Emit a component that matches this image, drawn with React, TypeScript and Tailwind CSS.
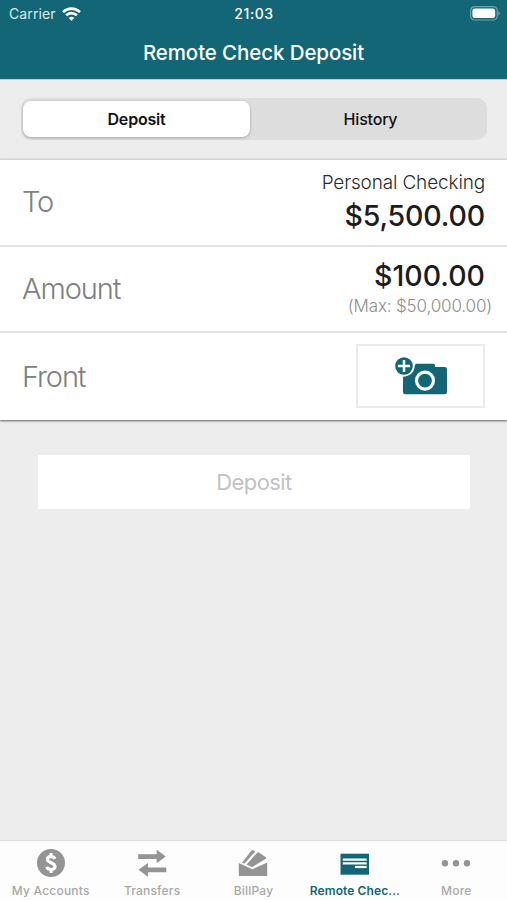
import type { ReactNode } from 'react'
import clsx from 'clsx'

function WifiIcon() {
  return (
    <svg width="19" height="14" viewBox="0 0 19 14" fill="none" stroke="#fff" strokeWidth="2.6">
      <path d="M1 5.1C5.8 .4 13.2 .4 18 5.1" />
      <path d="M4.1 8.3C7.2 5.4 11.8 5.4 14.9 8.3" />
      <path d="M6.6 10.9C8.3 9.4 10.7 9.4 12.4 10.9L9.5 13.8Z" fill="#fff" stroke="none" />
    </svg>
  )
}

function BatteryIcon() {
  return (
    <svg width="31" height="15" viewBox="0 0 31 15">
      <rect x=".6" y=".6" width="26.6" height="13.4" rx="4" fill="none" stroke="#6fa5ae" strokeWidth="1.2" />
      <rect x="2.4" y="2.6" width="22.8" height="9.4" rx="2.2" fill="#fff" />
      <path d="M28.4 5.1C30.5 6 30.5 8.6 28.4 9.5Z" fill="#6fa5ae" />
    </svg>
  )
}

function CameraIcon() {
  return (
    <svg width="53" height="38" viewBox="0 0 53 38">
      <path
        d="M21.5 6.8H38.2Q40 6.8 40 8.6V10H49.7Q52 10 52 12.3V34.8Q52 37.3 49.5 37.3H10.4Q8 37.3 8 34.8V19.7C14.5 19.5 19.5 15.5 19.7 9Q20 6.8 21.5 6.8Z"
        fill="#126675"
      />
      <circle cx="30" cy="23.6" r="8.5" fill="#126675" stroke="#fff" strokeWidth="3.2" />
      <circle cx="9" cy="9" r="8.8" fill="#126675" />
      <path d="M9 2.9V15.1M2.9 9H15.1" stroke="#fff" strokeWidth="2.5" />
    </svg>
  )
}

function DollarIcon() {
  return (
    <svg width="30" height="30" viewBox="0 0 30 30" fill="none" stroke="#fff">
      <circle cx="15" cy="15" r="14" fill="#949494" stroke="none" />
      <path
        d="M19 10.9C17.6 7.8 11.4 7.8 11.4 11.3C11.4 15.2 19 14.2 19 18.6C19 22.4 12.2 22.4 10.7 18.9"
        strokeWidth="3.2"
      />
      <path d="M15.1 5V9M15.1 21V25" strokeWidth="3" />
    </svg>
  )
}

function TransferIcon() {
  return (
    <svg width="30" height="30" viewBox="0 0 30 30" fill="#949494">
      <path d="M1.2 6.2H19.7V1.8L28.8 8.5L19.7 15.2V10.9H1.2Z" />
      <path d="M29.3 19.4H11V15L1.5 21.8L11 28.7V24.2H29.3Z" />
    </svg>
  )
}

function BillPayIcon() {
  return (
    <svg width="30" height="30" viewBox="0 0 30 30" fill="#949494">
      <path d="M4.2 14.7L13.4 2.4Q14.2 1.6 15.2 2.2L17.2 3.5L6.6 15.6Z" />
      <path d="M8.6 16.4L19.2 4.7Q20 3.9 21 4.6L27.8 9.2Q28.7 10 27.7 10.8L14 19.2Z" />
      <path d="M.8 15L14.4 21.2L29.2 14.4V28H.8Z" />
    </svg>
  )
}

function CheckIcon() {
  return (
    <svg width="30" height="30" viewBox="0 0 30 30">
      <path d="M.5 5.7H29V26.7H.5Z" fill="#126675" />
      <path d="M2.8 11.6H26.7M2.8 15.4H26.7" stroke="#fff" strokeWidth="2.4" />
      <path d="M15 19H26.7" stroke="#fff" strokeWidth="2.2" />
    </svg>
  )
}

function MoreIcon() {
  return (
    <svg width="30" height="30" viewBox="0 0 30 30" fill="#949494">
      <circle cx="4" cy="15.3" r="3.2" />
      <circle cx="15" cy="15.3" r="3.2" />
      <circle cx="26" cy="15.3" r="3.2" />
    </svg>
  )
}

const tabs = [
  { label: 'My Accounts', icon: <DollarIcon /> },
  { label: 'Transfers', icon: <TransferIcon /> },
  { label: 'BillPay', icon: <BillPayIcon /> },
  { label: 'Remote Chec...', icon: <CheckIcon />, active: true },
  { label: 'More', icon: <MoreIcon /> },
]

function Row({ label, children }: { label: string; children: ReactNode }) {
  return (
    <div className="flex h-full items-center justify-between pr-[22px] pl-[22px]">
      <span className="text-[29px] leading-9 font-light tracking-[-1.1px] text-[#808080]">{label}</span>
      {children}
    </div>
  )
}

export default function App() {
  return (
    <div className="flex h-[900px] w-[507px] flex-col bg-[#ededed] font-['Inter',sans-serif]">
      <header className="h-[79px] shrink-0 bg-[#126675] text-white">
        <div className="grid h-[27px] grid-cols-3 items-center pr-[6px] pl-[9px]">
          <div className="flex items-center gap-[6px]">
            <span className="text-[14px] tracking-[0.1px] text-[#dcebed]">Carrier</span>
            <WifiIcon />
          </div>
          <span className="pr-[2px] text-center text-[14px] font-medium tracking-[0.6px]">21:03</span>
          <div className="flex justify-end">
            <BatteryIcon />
          </div>
        </div>
        <h1 className="pt-[12px] text-center text-[20.5px] leading-7 font-medium tracking-[-0.1px]">
          Remote Check Deposit
        </h1>
      </header>

      <div className="h-[81px] shrink-0 border-t border-b-2 border-t-[#b5d2d7] border-b-[#dfdfdf] pt-[18px] pr-[20px] pl-[21px]">
        <div className="grid h-[42px] grid-cols-[227px_1fr] rounded-[10px] bg-[#dddddd] py-[3px] pl-[2px] text-[16px] text-[#111]">
          <button className="rounded-[8px] bg-white font-semibold tracking-[-0.2px] shadow-[0_1px_3px_#00000040]">
            Deposit
          </button>
          <button className="pl-[4px] font-medium tracking-[-0.2px]">History</button>
        </div>
      </div>

      <section className="grid h-[260px] shrink-0 grid-rows-3 divide-y-2 divide-[#e2e2e2] bg-white text-[#1c1c1c] shadow-[0_1px_2px_#00000099]">
        <Row label="To">
          <div className="pt-[3px] text-right">
            <p className="text-[19px] leading-6 font-light tracking-[-0.15px] text-[#2c2c2c]">Personal Checking</p>
            <p className="pt-px text-[28.5px] leading-10 font-medium tracking-[-0.15px]">$5,500.00</p>
          </div>
        </Row>
        <Row label="Amount">
          <div className="pb-[2px] text-right">
            <p className="text-[28.5px] leading-9 font-medium tracking-[0px]">$100.00</p>
            <p className="mr-[-7px] text-[17px] leading-6 font-light tracking-[-0.15px] text-[#8e8e8e]">
              (Max: $50,000.00)
            </p>
          </div>
        </Row>
        <Row label="Front">
          <button className="mb-px flex h-16 w-[129px] items-center justify-center border-2 border-[#ebebeb] pl-[2px]">
            <CameraIcon />
          </button>
        </Row>
      </section>

      <button className="mt-[35px] mr-[37px] ml-[38px] h-[54px] shrink-0 bg-white text-[22px] tracking-[-0.6px] text-[#c2c2c2]">
        Deposit
      </button>

      <nav className="mt-auto grid h-[60px] grid-cols-5 border-t border-[#dedede] bg-[#fdfdfd]">
        {tabs.map((tab) => (
          <button key={tab.label} className="flex flex-col items-center pt-[7px]">
            {tab.icon}
            <span
              className={clsx(
                'mt-[5px] text-[12px] leading-4 whitespace-nowrap',
                tab.active
                  ? 'font-semibold tracking-[0.1px] text-[#126675]'
                  : 'font-medium tracking-[0.2px] text-[#a8a8a8]'
              )}
            >
              {tab.label}
            </span>
          </button>
        ))}
      </nav>
    </div>
  )
}
